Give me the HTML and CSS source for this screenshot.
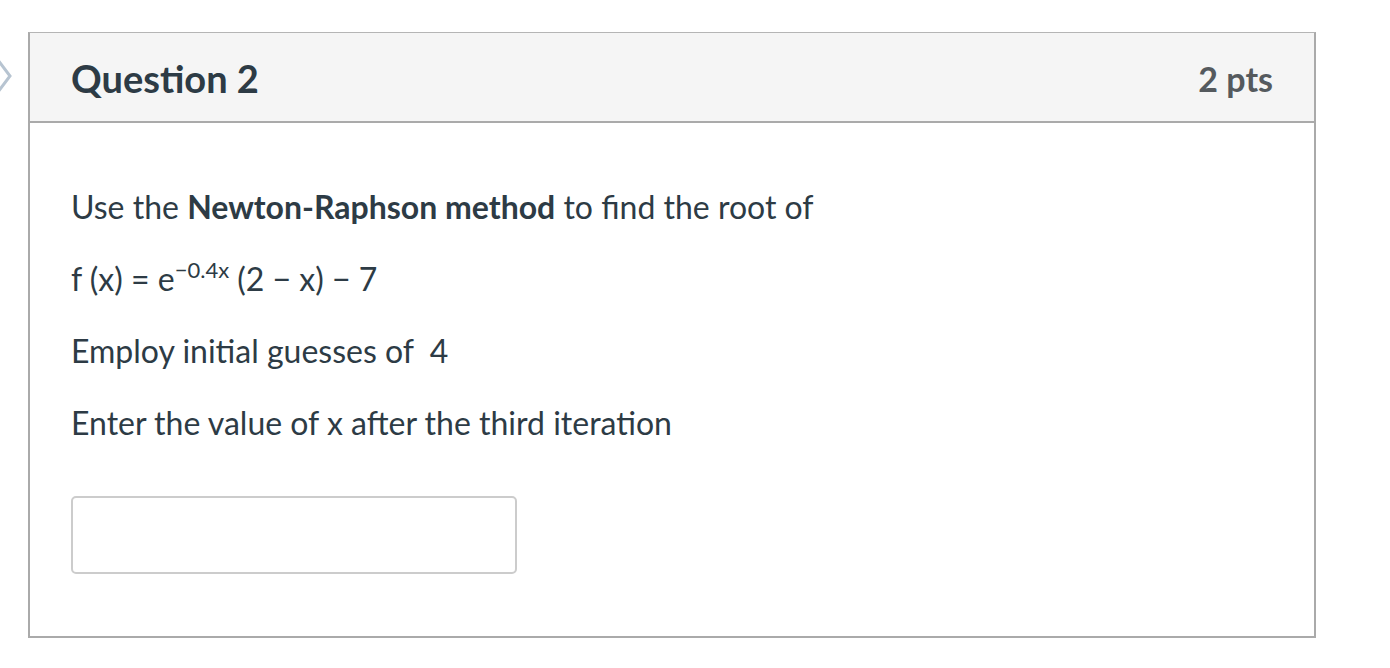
FILE: index.html
```html
<!DOCTYPE html>
<html>
<head>
<meta charset="utf-8">
<link rel="stylesheet" href="styles.css">
</head>
<body>
<div class="page">
  <svg class="nav-arrow" width="14" height="36" viewBox="0 0 14 36"><path d="M-2 2 L10 18 L-2 34" fill="none" stroke="#b7c4d1" stroke-width="3"/></svg>
  <div class="card">
    <div class="card-header">
      <span class="q-title">Question 2</span>
      <span class="q-pts">2 pts</span>
    </div>
    <div class="card-body">
      <p>Use the <strong>Newton-Raphson method</strong> to find the root of</p>
      <p>f (x) = e<sup>−0.4x</sup> (2 − x) − 7</p>
      <p>Employ initial guesses of&nbsp; 4</p>
      <p>Enter the value of x after the third iteration</p>
      <input class="answer" type="text">
    </div>
  </div>
</div>
</body>
</html>
```
FILE: styles.css
```css
html, body { margin: 0; padding: 0; background: #fff; }
body { font-family: Lato, "Open Sans", sans-serif; color: #2d3b45; }
.page { position: relative; padding: 32px 0 0 28px; width: 1288px; }
.nav-arrow { position: absolute; left: 0; top: 58px; }
.card { border: 2px solid #aaaaaa; border-width: 1px 2px 2px 2px; border-top-color: #b5b5b5; }
.card-header {
  background: #f5f5f5;
  border-bottom: 2px solid #aaaaaa;
  height: 88px;
  display: flex; align-items: center; justify-content: space-between;
  padding: 0 41px 0 41px;
}
.q-title { font-size: 38px; font-weight: 700; color: #2d3b45; position: relative; top: 1px; }
.q-pts { font-size: 34px; font-weight: 700; color: #555a5e; position: relative; top: 1px; }
.card-body { padding: 63px 41px 62px 41px; }
.card-body p { font-size: 32px; margin: 0 0 30px 0; line-height: 42px; }
.card-body strong { font-weight: 700; }
sup { font-size: 22px; line-height: 0; vertical-align: 13px; }
.answer {
  display: block;
  margin-top: 52px;
  width: 442px; height: 74px;
  box-sizing: content-box;
  padding: 0;
  border: 2px solid #cccccc; border-radius: 5px;
  background: #fff;
  outline: none;
}
```
